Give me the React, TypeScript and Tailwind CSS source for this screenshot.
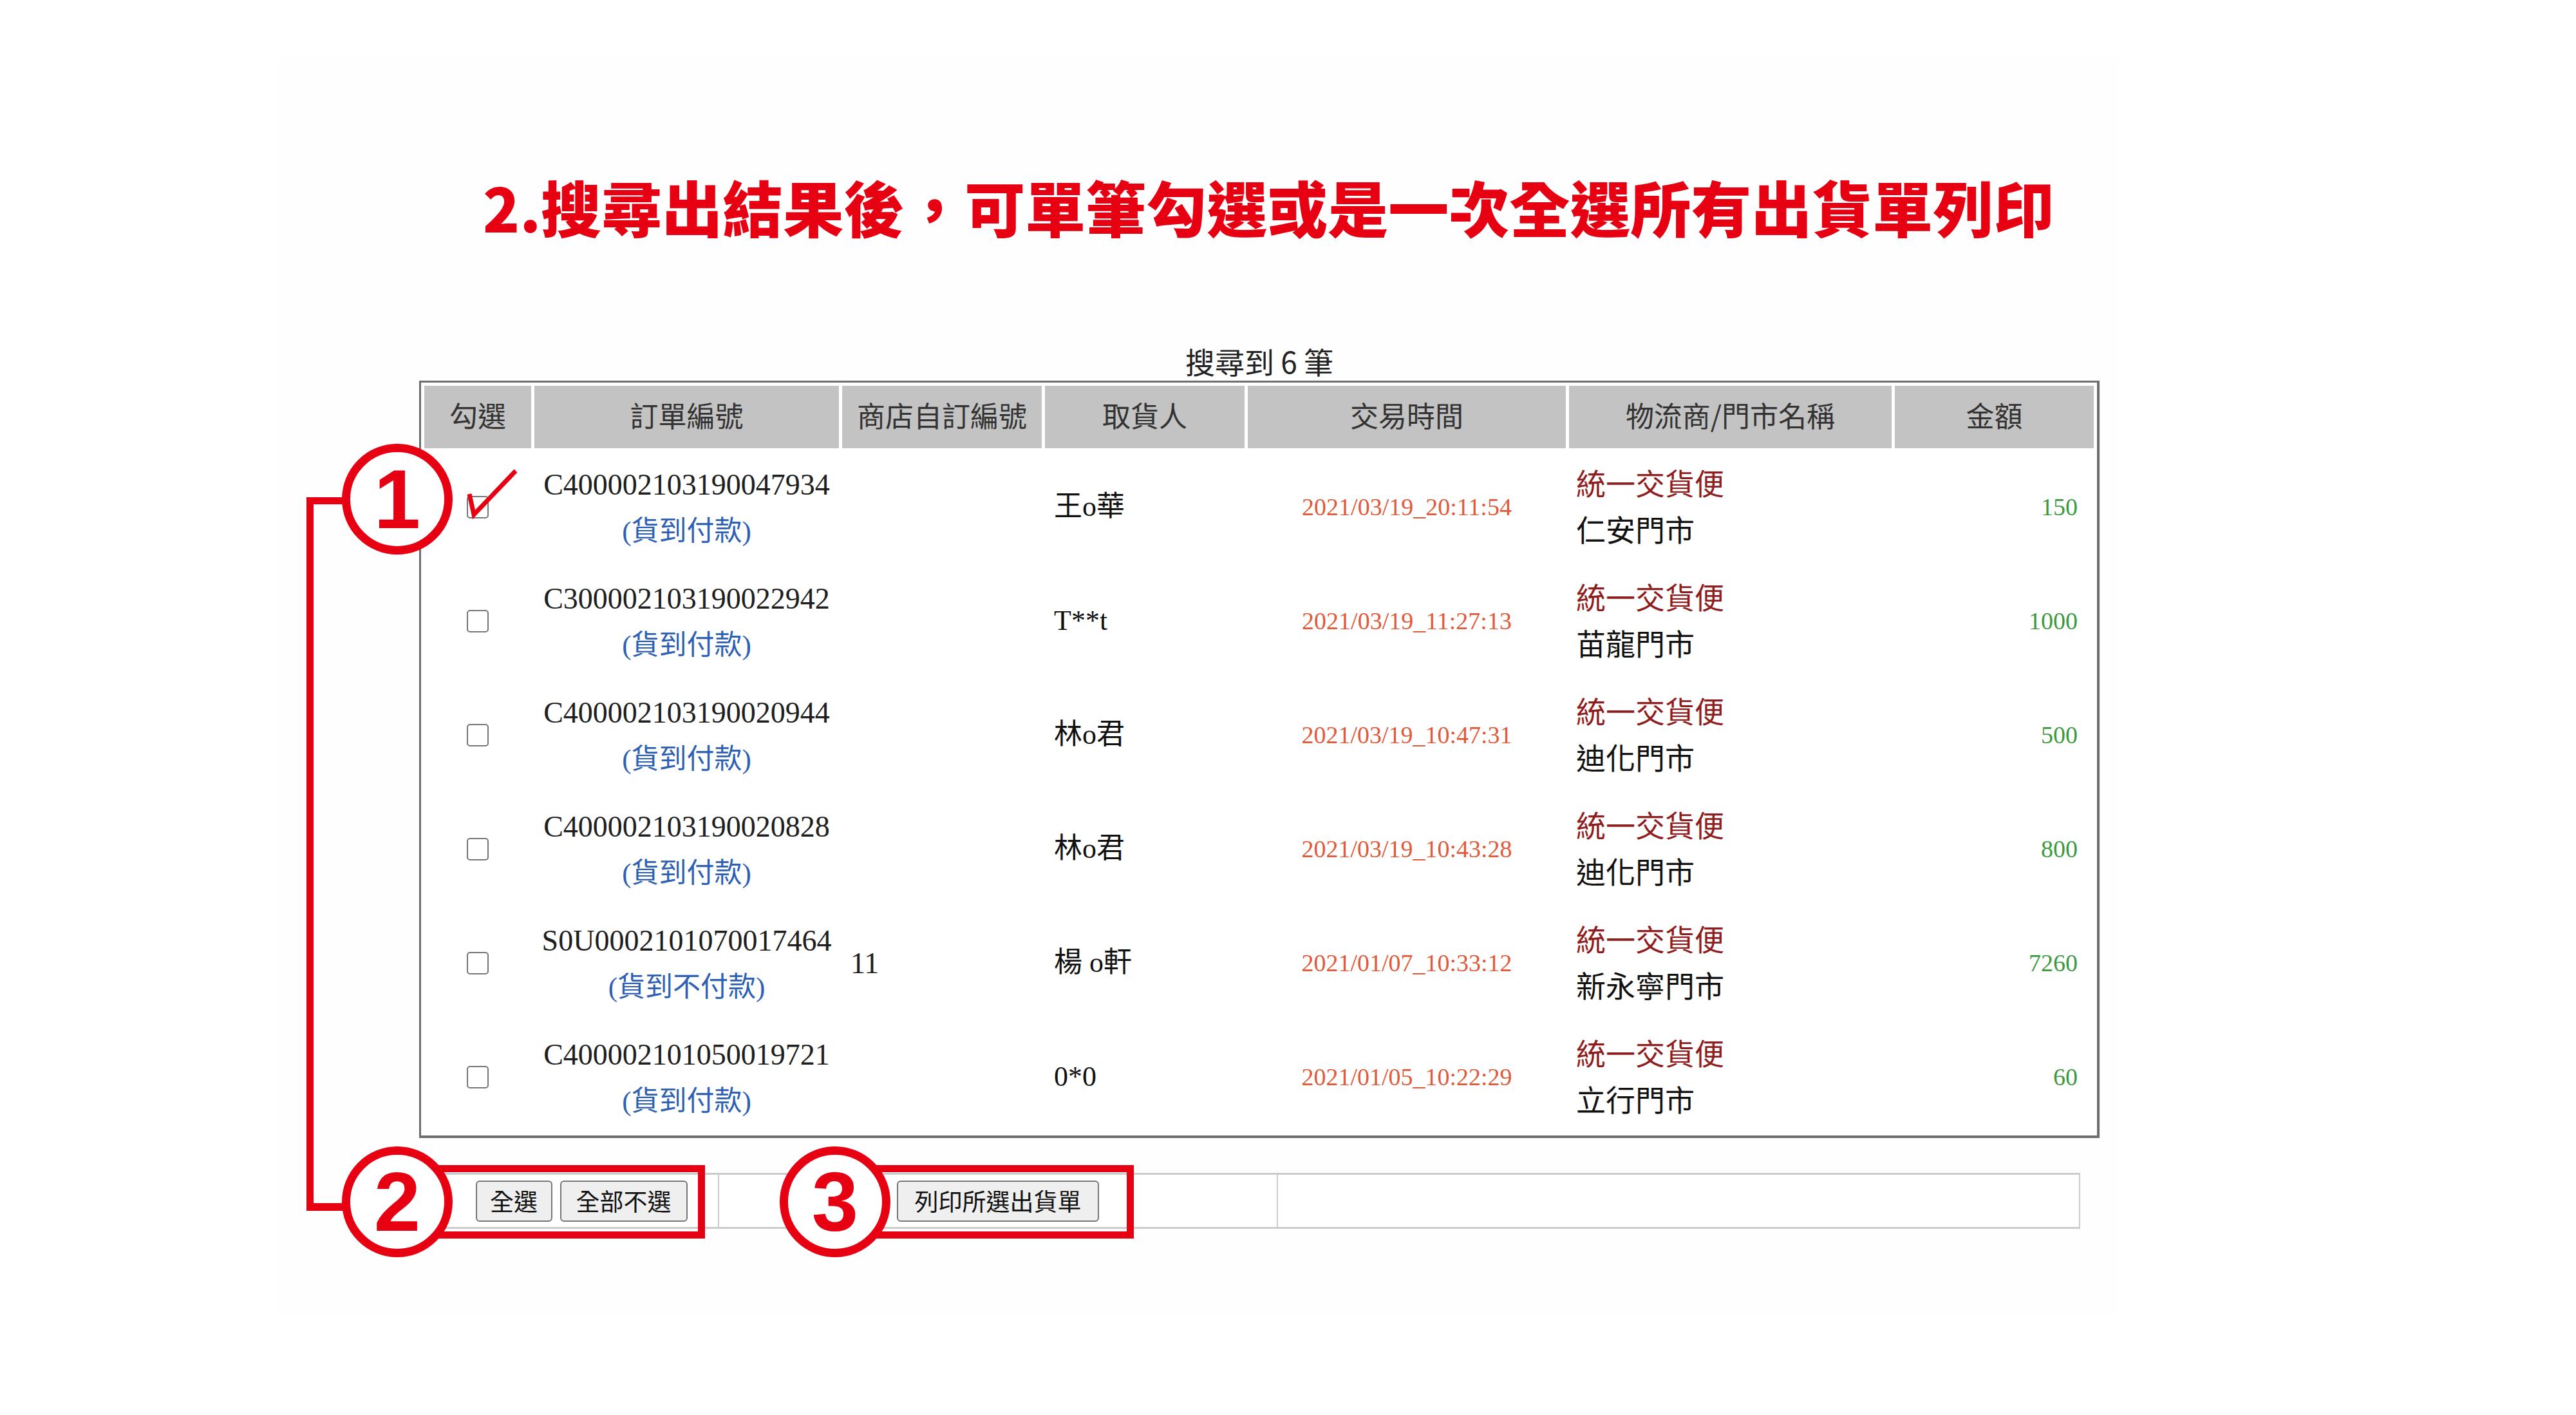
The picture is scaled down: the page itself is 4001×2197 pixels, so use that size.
import React from 'react';

const serif = "font-['Liberation_Serif','Noto_Sans_CJK_TC',serif]";
const sans = "font-['Noto_Sans_CJK_TC','Liberation_Sans',sans-serif]";

const rows = [
  { no: 'C400002103190047934', pay: '(貨到付款)', shop: '', name: '王o華', time: '2021/03/19_20:11:54', store: '仁安門市', amount: '150' },
  { no: 'C300002103190022942', pay: '(貨到付款)', shop: '', name: 'T**t', time: '2021/03/19_11:27:13', store: '苗龍門市', amount: '1000' },
  { no: 'C400002103190020944', pay: '(貨到付款)', shop: '', name: '林o君', time: '2021/03/19_10:47:31', store: '迪化門市', amount: '500' },
  { no: 'C400002103190020828', pay: '(貨到付款)', shop: '', name: '林o君', time: '2021/03/19_10:43:28', store: '迪化門市', amount: '800' },
  { no: 'S0U0002101070017464', pay: '(貨到不付款)', shop: '11', name: '楊 o軒', time: '2021/01/07_10:33:12', store: '新永寧門市', amount: '7260' },
  { no: 'C400002101050019721', pay: '(貨到付款)', shop: '', name: '0*0', time: '2021/01/05_10:22:29', store: '立行門市', amount: '60' },
];

const headers = ['勾選', '訂單編號', '商店自訂編號', '取貨人', '交易時間', '物流商/門市名稱', '金額'];
const colW = ['w-[166px]', 'w-[473px]', 'w-[310px]', 'w-[310px]', 'w-[494px]', 'w-[501px]', 'w-[309px]'];

function Badge({ n, className }: { n: string; className: string }) {
  return (
    <div className={`absolute w-[172px] h-[172px] rounded-full border-[13px] border-[#e60012] bg-white flex items-center justify-center ${className}`}>
      <span className="font-['Liberation_Sans',sans-serif] font-bold text-[130px] leading-none text-[#e60012]">{n}</span>
    </div>
  );
}

export default function App() {
  return (
    <div className="relative w-[4001px] h-[2197px] bg-white overflow-hidden pt-[88px]">
      <div className="ml-[432px] w-[2860px] h-[1953px] bg-[#fefefe] pt-[172px] flex flex-col">
        {/* title */}
        <div className={`ml-[318px] w-[2438px] text-center whitespace-nowrap text-[94px] leading-[120px] font-black text-[#e60012] ${sans}`}>
          2.搜尋出結果後，可單筆勾選或是一次全選所有出貨單列印
        </div>

        {/* result count */}
        <div className={`mt-[152px] ml-[219px] w-[2610px] text-center text-[46px] leading-[56px] text-[#222] ${sans}`}>
          搜尋到 6 筆
        </div>

        {/* result table */}
        <table className="mt-[3px] ml-[219px] w-[2610px] table-fixed border-separate border-spacing-[5px] border-t-[3px] border-l-[3px] border-r-4 border-b-4 border-[#6e6e6e] bg-white">
          <colgroup>
            {colW.map((w, i) => (
              <col key={i} className={w} />
            ))}
          </colgroup>
          <thead>
            <tr>
              {headers.map((h) => (
                <th key={h} className={`h-[97px] p-0 pb-[8px] bg-[#c3c3c3] text-center align-middle text-[44px] font-normal text-[#333] ${sans}`}>
                  {h}
                </th>
              ))}
            </tr>
          </thead>
          <tbody>
            {rows.map((r) => (
              <tr key={r.no}>
                <td className="h-[172px] p-0 text-center align-middle">
                  <input type="checkbox" className="appearance-none align-middle w-[34px] h-[35px] border-2 border-[#767676] rounded-[5px] bg-white" />
                </td>
                <td className={`p-0 pt-[4px] text-center align-middle leading-[72px] ${serif}`}>
                  <div className="text-[46px] text-[#1e1e1e]">{r.no}</div>
                  <div className="text-[43px] text-[#2d5fb5]">{r.pay}</div>
                </td>
                <td className={`p-0 pl-[13px] text-left align-middle text-[46px] text-[#1e1e1e] ${serif}`}>{r.shop}</td>
                <td className={`p-0 pl-[14px] text-left align-middle text-[44px] text-[#111] ${serif}`}>{r.name}</td>
                <td className={`p-0 text-center align-middle text-[38px] text-[#e05a3a] ${serif}`}>{r.time}</td>
                <td className={`p-0 pl-[11px] pb-[6px] text-left align-middle text-[46px] leading-[72px] ${sans}`}>
                  <div className="text-[#8f1d1d]">統一交貨便</div>
                  <div className="text-[#111]">{r.store}</div>
                </td>
                <td className={`p-0 pr-[25px] text-right align-middle text-[38px] text-[#3c9a3c] ${serif}`}>{r.amount}</td>
              </tr>
            ))}
          </tbody>
        </table>

        {/* action bar */}
        <div className={`mt-[54px] ml-[257px] w-[2542px] h-[87px] flex border-y-[3px] border-x-2 border-[#cccccc] bg-white ${sans}`}>
          <div className="w-[424px] flex items-center justify-center gap-[12px]">
            <button className="w-[119px] h-[64px] bg-[#efefef] border-2 border-[#767676] rounded-[6px] text-[37px] leading-none text-[#111]">全選</button>
            <button className="w-[198px] h-[64px] bg-[#efefef] border-2 border-[#767676] rounded-[6px] text-[37px] leading-none text-[#111]">全部不選</button>
          </div>
          <div className="w-[868px] border-l-2 border-[#cccccc] flex items-center justify-center">
            <button className="w-[314px] h-[64px] bg-[#efefef] border-2 border-[#767676] rounded-[6px] text-[37px] leading-none text-[#111]">列印所選出貨單</button>
          </div>
          <div className="flex-1 border-l-2 border-[#cccccc]" />
        </div>
      </div>

      {/* annotations */}
      <div className="absolute left-[476px] top-[772px] w-[11px] h-[1108px] bg-[#e60012]" />
      <div className="absolute left-[476px] top-[772px] w-[80px] h-[11px] bg-[#e60012]" />
      <div className="absolute left-[476px] top-[1868px] w-[80px] h-[12px] bg-[#e60012]" />

      <div className="absolute left-[617px] top-[1809px] w-[478px] h-[114px] border-[11px] border-[#e60012]" />
      <div className="absolute left-[1296px] top-[1809px] w-[465px] h-[114px] border-[11px] border-[#e60012]" />

      <Badge n="1" className="left-[531px] top-[689px]" />
      <Badge n="2" className="left-[531px] top-[1780px]" />
      <Badge n="3" className="left-[1211px] top-[1780px]" />

      <svg className="absolute left-[720px] top-[725px]" width="90" height="85" viewBox="0 0 90 85">
        <polyline points="9,42 16,74 81,6" fill="none" stroke="#e60012" strokeWidth="7" strokeLinejoin="miter" />
      </svg>
    </div>
  );
}
